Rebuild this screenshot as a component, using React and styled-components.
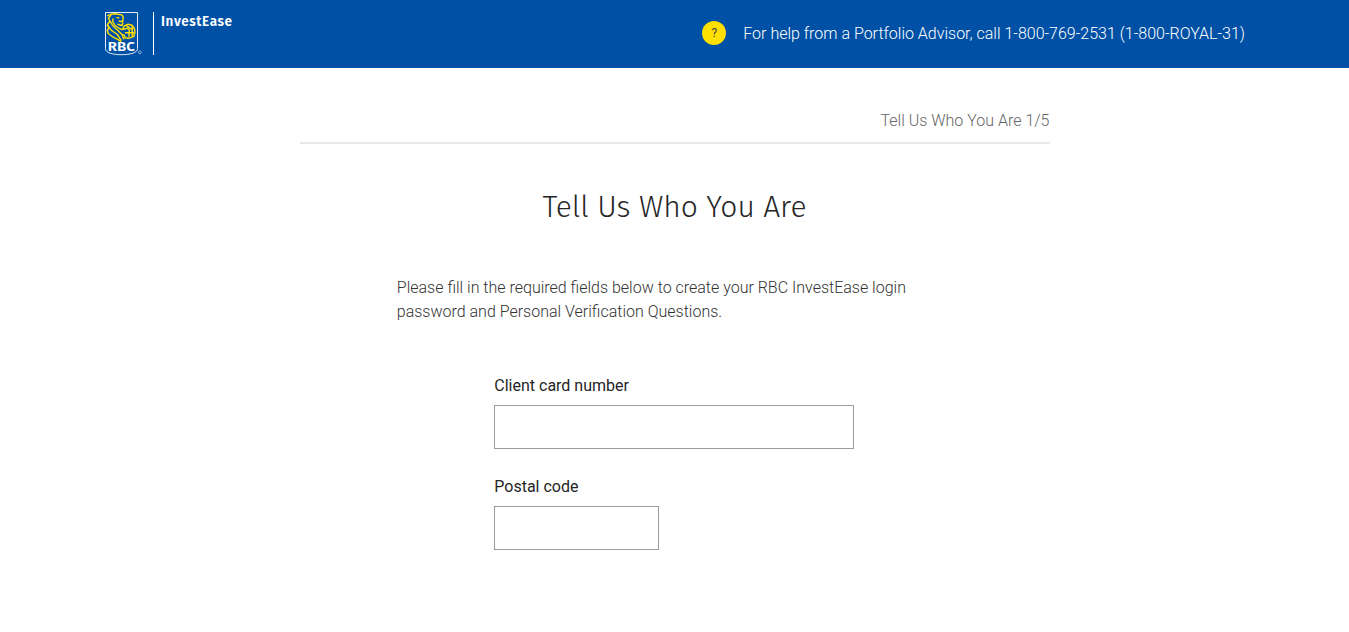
import React from "react";
import styled, { createGlobalStyle } from "styled-components";

const GlobalStyle = createGlobalStyle`
  * { box-sizing: border-box; }
  body {
    margin: 0;
    background: #fff;
    color: #333;
    font-family: Roboto, "Liberation Sans", sans-serif;
    font-size: 16px;
    font-weight: 300;
    line-height: 24px;
  }
`;

const Header = styled.header`
  display: flex;
  justify-content: space-between;
  height: 68px;
  padding: 0 104px;
  background: #0051a5;
  color: #fff;
`;

const Brand = styled.div`
  display: flex;
  padding-top: 12px;
`;

const Shield = styled.svg`
  display: block;
  width: 39px;
  height: 44px;
`;

const BrandName = styled.span`
  height: 43px;
  margin-left: 10px;
  padding-left: 7px;
  border-left: 1px solid #fff;
  font-family: "Fira Sans", "Noto Sans", sans-serif;
  font-size: 13.5px;
  font-weight: 600;
  line-height: 19px;
  letter-spacing: 0.6px;
`;

const Help = styled.div`
  display: flex;
  align-items: center;
  height: 66px;
  gap: 17px;
`;

const HelpText = styled.span`
  padding-top: 2px;
`;

const HelpBadge = styled.span`
  width: 24px;
  height: 24px;
  border-radius: 50%;
  background: #ffe000;
  color: #444;
  font-size: 12px;
  font-weight: 400;
  text-align: center;
`;

const Main = styled.main`
  width: 750px;
  margin: 41px auto 0;
`;

const Progress = styled.div`
  padding-bottom: 9px;
  border-bottom: 2px solid #e8e8e8;
  color: #666;
  text-align: right;
`;

const Title = styled.h1`
  margin: 43px 0 0;
  color: #252525;
  font-family: "Fira Sans", "Noto Sans", sans-serif;
  font-size: 30px;
  font-weight: 300;
  line-height: 40px;
  text-align: center;
`;

const Intro = styled.p`
  width: 555.4px;
  margin: 49px auto 0;
`;

const Form = styled.form`
  display: flex;
  flex-direction: column;
  gap: 26px;
  width: 360.4px;
  margin: 50px auto 0;
`;

const Field = styled.label`
  display: block;
  color: #252525;
  font-weight: 400;
`;

const Input = styled.input`
  display: block;
  width: ${(p) => p.$width}px;
  height: 44px;
  margin-top: 7px;
  padding: 0 12px;
  border: 1px solid #9c9c9c;
  border-radius: 0;
  background: #fff;
  font: inherit;
`;

function Logo() {
  return (
    <Shield viewBox="0 0 39 44" aria-label="RBC">
      <path d="M1.5.5h32v36.2c0 4-7 6-16 6s-16-2-16-6z" fill="#0051a5" stroke="#e4edf6" />
      <g fill="none" stroke="#ffe000" strokeWidth="1.4" strokeLinejoin="round">
        <path d="M3.2 3.8 7 2.2l4-.5 7 1.2 1.2 2.2-.5 4.4-4-.3M12.5 5.5l2.8.4M13.5 12.3l4.6 1.2.8-3" />
        <path d="M7 3 4.4 6.3 6 9l-2.8 4L5 16l-1.8 2.5 1.2 3.3 4.2 3 5 2.5 3.6 2.4" />
        <path d="M6 9.2 9 14l5 4.5 4.2 4.2 1.6 4.5M3.5 13l3.8 5.3 6 4.2 4 6.2M9.4 6.4 8.5 9.2l2.3 4 4.5 3.3 3.5 1.2" />
        <path d="M18.7 17.3 20.2 14l4-1.8 3.8 1 2.4 3.3.5 4.2-1.4 4-4.2 1.5-5-.5M18.5 17.7l5-1.5 1.8 2-.4 6.6M28.2 13.7v10.5M21 20.7h9M19.3 22l2 3.3M22.3 13.4l5.5 4.1" />
      </g>
      <text x="17.3" y="38.5" fill="#fff" fontFamily="Fira Sans, Noto Sans, sans-serif" fontWeight="600" fontSize="13" textAnchor="middle" textLength="27" lengthAdjust="spacingAndGlyphs">RBC</text>
      <circle cx="35.8" cy="40.3" r="1.4" fill="none" stroke="#b2cae3" strokeWidth=".8" />
    </Shield>
  );
}

export default function App() {
  return (
    <>
      <GlobalStyle />
      <Header>
        <Brand>
          <Logo />
          <BrandName>InvestEase</BrandName>
        </Brand>
        <Help>
          <HelpBadge>?</HelpBadge>
          <HelpText>For help from a Portfolio Advisor, call 1-800-769-2531 (1-800-ROYAL-31)</HelpText>
        </Help>
      </Header>
      <Main>
        <Progress>Tell Us Who You Are 1/5</Progress>
        <Title>Tell Us Who You Are</Title>
        <Intro>
          Please fill in the required fields below to create your RBC InvestEase login password and
          Personal Verification Questions.
        </Intro>
        <Form>
          <Field>
            Client card number
            <Input $width={360} />
          </Field>
          <Field>
            Postal code
            <Input $width={165} />
          </Field>
        </Form>
      </Main>
    </>
  );
}
